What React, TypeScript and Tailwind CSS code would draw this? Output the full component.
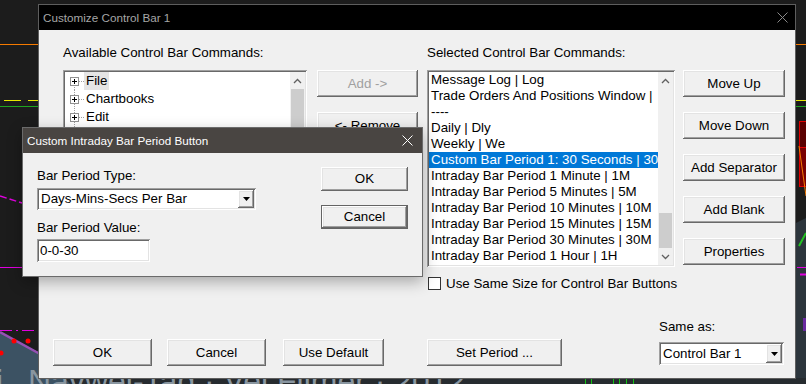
import React from "react";

const raised =
  "shadow-[inset_-1px_-1px_#696969,inset_1px_1px_#ffffff,inset_-2px_-2px_#a0a0a0,inset_2px_2px_#e3e3e3]";
const sunken =
  "shadow-[inset_1px_1px_#a0a0a0,inset_-1px_-1px_#ffffff,inset_2px_2px_#696969,inset_-2px_-2px_#e3e3e3]";

function Button({
  label,
  className = "",
  disabled = false,
}: {
  label: string;
  className?: string;
  disabled?: boolean;
}) {
  return (
    <div
      className={`flex items-center justify-center whitespace-nowrap bg-[#f0f0f0] ${raised} ${
        disabled ? "text-[#a0a0a0]" : "text-black"
      } ${className}`}
    >
      {label}
    </div>
  );
}

function Chevron({ up = false }: { up?: boolean }) {
  return (
    <svg width="9" height="6" viewBox="0 0 9 6">
      <polyline
        points={up ? "1,5 4.5,1.5 8,5" : "1,1 4.5,4.5 8,1"}
        fill="none"
        stroke="#606060"
        strokeWidth="1.3"
      />
    </svg>
  );
}

function DropArrow() {
  return (
    <div className={`flex w-[16px] items-center justify-center bg-[#f0f0f0] ${raised}`}>
      <svg width="7" height="4" viewBox="0 0 7 4">
        <polygon points="0,0 7,0 3.5,4" fill="#000" />
      </svg>
    </div>
  );
}

function CloseGlyph({ color }: { color: string }) {
  return (
    <svg width="11" height="11" viewBox="0 0 11 11">
      <line x1="0.5" y1="0.5" x2="10.5" y2="10.5" stroke={color} strokeWidth="1" />
      <line x1="10.5" y1="0.5" x2="0.5" y2="10.5" stroke={color} strokeWidth="1" />
    </svg>
  );
}

function TreeRow({ label, first = false, active = false }: { label: string; first?: boolean; active?: boolean }) {
  return (
    <div className="flex h-[18px] items-center">
      <svg width="14" height="18" viewBox="0 0 14 18">
        <line
          x1="4.5"
          y1={first ? 9 : 0}
          x2="4.5"
          y2="18"
          stroke="#a0a0a0"
          strokeDasharray="1 1"
        />
        <line x1="9" y1="9.5" x2="14" y2="9.5" stroke="#a0a0a0" strokeDasharray="1 1" />
        <rect x="0.5" y="5.5" width="8" height="8" fill="#fff" stroke="#919191" />
        <line x1="2" y1="9.5" x2="7" y2="9.5" stroke="#000" />
        <line x1="4.5" y1="7" x2="4.5" y2="12" stroke="#000" />
      </svg>
      <span className={`h-[18px] px-[2px] leading-[18px] ${active ? "bg-[#e5e5e5]" : ""}`}>{label}</span>
    </div>
  );
}

const treeItems = ["File", "Chartbooks", "Edit", "View", "Analysis", "Trade", "Global Settings", "Window", "Help", "Miscellaneous", "Drawing Tools"];

const selectedItems = [
  "Message Log | Log",
  "Trade Orders And Positions Window |",
  "----",
  "Daily | Dly",
  "Weekly | We",
  "Custom Bar Period 1: 30 Seconds | 30s",
  "Intraday Bar Period 1 Minute | 1M",
  "Intraday Bar Period 5 Minutes | 5M",
  "Intraday Bar Period 10 Minutes | 10M",
  "Intraday Bar Period 15 Minutes | 15M",
  "Intraday Bar Period 30 Minutes | 30M",
  "Intraday Bar Period 1 Hour | 1H",
];

function ChartBackdrop() {
  return (
    <svg className="absolute inset-0" width="806" height="384" viewBox="0 0 806 384">
      <rect width="806" height="384" fill="#1c1c1c" />
      <line x1="0" y1="44.5" x2="806" y2="44.5" stroke="#f57a00" />
      <line x1="4" y1="100.5" x2="21" y2="100.5" stroke="#e8e800" />
      <line x1="28" y1="100.5" x2="40" y2="100.5" stroke="#e8e800" />
      <line x1="790" y1="100.5" x2="806" y2="100.5" stroke="#e8e800" />
      <line x1="0" y1="106.5" x2="806" y2="106.5" stroke="#1ea51e" />
      <rect x="799.5" y="121.5" width="10" height="65" fill="#5a0000" stroke="#e00000" />
      <rect x="799.5" y="147.5" width="10" height="39" fill="#7a0000" stroke="#e00000" />
      <line x1="799" y1="146" x2="806" y2="196" stroke="#f57a00" />
      <polygon points="790,226 806,218 806,384 790,384" fill="#2c353c" />
      <line x1="799" y1="246" x2="806" y2="233" stroke="#22c322" strokeWidth="2" />
      <line x1="797" y1="267.5" x2="806" y2="267.5" stroke="#e000e0" />
      <line x1="800" y1="274.5" x2="806" y2="274.5" stroke="#e000e0" strokeWidth="2" />
      <rect x="803" y="318" width="4" height="13" fill="#6a2aa0" />
      <line x1="0" y1="196" x2="22" y2="203" stroke="#e000e0" strokeWidth="1.5" strokeDasharray="7 3" />
      <line x1="0" y1="267.5" x2="24" y2="267.5" stroke="#e000e0" />
      <line x1="0" y1="330.5" x2="40" y2="330.5" stroke="#e000e0" strokeDasharray="12 4 2 4" />
      <polygon points="0,332 40,353 90,384 0,384" fill="#3c5263" />
      <rect x="0" y="378" width="806" height="6" fill="#262b2f" />
      <polygon points="0,332 40,353 70,384 0,384" fill="#3c5263" />
      <line x1="0" y1="332" x2="40" y2="354" stroke="#9650b4" strokeWidth="2.5" />
      <circle cx="14" cy="341" r="2.5" fill="#ff0000" />
      <circle cx="28" cy="341" r="2.5" fill="#ff0000" />
      <circle cx="1" cy="353" r="2.5" fill="#ff0000" />
      <text x="-4" y="392" fontSize="32" fill="#8996a0" fontFamily="Liberation Sans, Arial, sans-serif">
        i
      </text>
      <text x="28" y="392" fontSize="32" fill="#8996a0" fontFamily="Liberation Sans, Arial, sans-serif">
        Navwel-Tag · Vel Filmer · 2012
      </text>
      {[585, 591, 613, 619, 626, 633].map((x) => (
        <line key={x} x1={x + 0.5} y1="379" x2={x + 0.5} y2="384" stroke="#13c013" />
      ))}
    </svg>
  );
}

function MainDialog() {
  return (
    <div className="absolute left-[38px] top-[4px] flex h-[375px] w-[758px] flex-col border border-[#5e5e5e]">
      <div className="flex h-[25px] items-center justify-between bg-black pl-[4px] pr-[7px] text-[11.7px] text-[#a6a6a6]">
        <span>Customize Control Bar 1</span>
        <CloseGlyph color="#8a8a8a" />
      </div>
      <div className="flex flex-1 flex-col bg-[#f0f0f0] pl-[14px] pt-[15px]">
        <div className="ml-[10px] flex">
          <div className="flex w-[244px] flex-col">
            <div className="h-[16px] whitespace-nowrap">Available Control Bar Commands:</div>
            <div className={`mt-[9px] flex h-[197px] overflow-hidden bg-white p-[2px] ${sunken}`}>
              <div className="flex flex-1 flex-col pl-[5px]">
                {treeItems.map((t, i) => (
                  <TreeRow key={t} label={t} first={i === 0} active={i === 0} />
                ))}
              </div>
              <div className="flex w-[15px] flex-col bg-[#f0f0f0]">
                <div className="flex h-[17px] items-center justify-center">
                  <Chevron up />
                </div>
                <div className="mx-[1px] h-[120px] bg-[#cdcdcd]" />
              </div>
            </div>
          </div>

          <div className="ml-[10px] flex w-[101px] flex-col gap-[15px] pt-[25px]">
            <Button label="Add ->" disabled className="h-[27px]" />
            <Button label="<- Remove" className="h-[27px]" />
          </div>

          <div className="ml-[9px] flex w-[248px] flex-col">
            <div className="h-[16px] whitespace-nowrap">Selected Control Bar Commands:</div>
            <div className={`mt-[9px] flex h-[197px] overflow-hidden bg-white p-[2px] ${sunken}`}>
              <div className="flex min-w-0 flex-1 flex-col">
                {selectedItems.map((t, i) => (
                  <div
                    key={t}
                    className={`h-[16px] overflow-hidden whitespace-nowrap pl-[2px] leading-[16px] ${
                      i === 5 ? "bg-[#0078d7] text-white" : ""
                    }`}
                  >
                    {t}
                  </div>
                ))}
              </div>
              <div className="flex w-[15px] flex-col bg-[#f0f0f0]">
                <div className="flex h-[17px] items-center justify-center">
                  <Chevron up />
                </div>
                <div className="h-[124px]" />
                <div className="mx-[1px] h-[35px] bg-[#cdcdcd]" />
                <div className="flex flex-1 items-center justify-center">
                  <Chevron />
                </div>
              </div>
            </div>
          </div>

          <div className="ml-[8px] flex w-[102px] flex-col gap-[15px] pt-[25px]">
            <Button label="Move Up" className="h-[27px]" />
            <Button label="Move Down" className="h-[27px]" />
            <Button label="Add Separator" className="h-[27px]" />
            <Button label="Add Blank" className="h-[27px]" />
            <Button label="Properties" className="h-[27px]" />
          </div>
        </div>

        <div className="ml-[375px] mt-[9px] flex h-[15px] items-center gap-[5px]">
          <div className="h-[13px] w-[13px] border border-[#333] bg-white" />
          <span className="whitespace-nowrap">Use Same Size for Control Bar Buttons</span>
        </div>

        <div className="mt-[28px] flex items-start">
          <Button label="OK" className="mt-[20px] h-[27px] w-[99px]" />
          <Button label="Cancel" className="ml-[15px] mt-[20px] h-[27px] w-[99px]" />
          <Button label="Use Default" className="ml-[17px] mt-[20px] h-[27px] w-[101px]" />
          <Button label="Set Period ..." className="ml-[43px] mt-[20px] h-[27px] w-[135px]" />
          <div className="ml-[97px] flex w-[125px] flex-col">
            <div className="h-[15px] leading-[15px]">Same as:</div>
            <div className={`mt-[8px] flex h-[23px] bg-white p-[2px] ${sunken}`}>
              <span className="flex-1 pl-[2px] leading-[19px]">Control Bar 1</span>
              <DropArrow />
            </div>
          </div>
        </div>
      </div>
    </div>
  );
}

function PeriodDialog() {
  return (
    <div className="absolute left-[22px] top-[127px] flex h-[150px] w-[401px] flex-col border border-[#6b6b6b] shadow-[0_5px_14px_rgba(0,0,0,0.3)]">
      <div className="flex h-[25px] items-center justify-between bg-[#494542] pl-[4px] pr-[9px] text-[11.7px] text-white">
        <span>Custom Intraday Bar Period Button</span>
        <CloseGlyph color="#ffffff" />
      </div>
      <div className="flex flex-1 bg-[#f0f0f0] pl-[14px] pr-[14px]">
        <div className="flex w-[219px] flex-col pt-[15px]">
          <div className="h-[15px] leading-[15px]">Bar Period Type:</div>
          <div className={`mt-[5px] flex h-[22px] bg-white p-[2px] ${sunken}`}>
            <span className="flex-1 pl-[2px] leading-[18px]">Days-Mins-Secs Per Bar</span>
            <DropArrow />
          </div>
          <div className="mt-[10px] h-[15px] leading-[15px]">Bar Period Value:</div>
          <div className={`mt-[4px] flex h-[23px] w-[113px] items-center bg-white pl-[3px] ${sunken}`}>0-0-30</div>
        </div>
        <div className="ml-auto flex w-[87px] flex-col gap-[14px] pt-[14px]">
          <Button label="OK" className="h-[24px]" />
          <Button label="Cancel" className="h-[24px] border border-[#646464]" />
        </div>
      </div>
    </div>
  );
}

export default function App() {
  return (
    <div className="relative h-[384px] w-[806px] overflow-hidden bg-[#1c1c1c] font-['Liberation_Sans',Arial,sans-serif] text-[13.33px] leading-[16px] text-black">
      <ChartBackdrop />
      <MainDialog />
      <PeriodDialog />
    </div>
  );
}
